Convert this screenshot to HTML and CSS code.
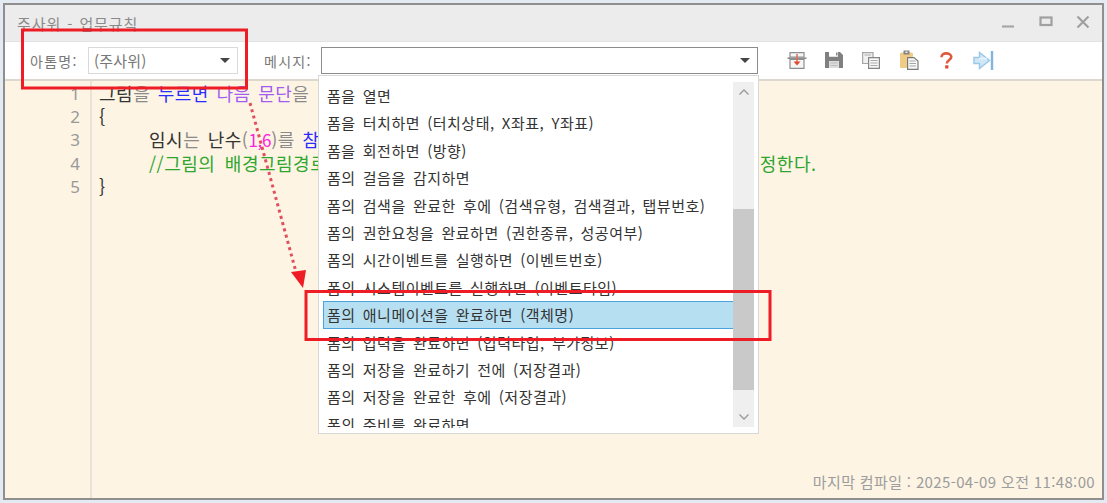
FILE: index.html
```html
<!DOCTYPE html>
<html lang="ko">
<head>
<meta charset="utf-8">
<title>주사위 - 업무규칙</title>
<link rel="stylesheet" href="styles.css">
</head>
<body>
<div class="window">
  <header class="titlebar">
    <span class="title">주사위 - 업무규칙</span>
    <div class="winbtns">
      <svg width="14" height="14" viewBox="0 0 14 14"><path d="M1 11.500H13" stroke="#a8a8a8" stroke-width="2.200" fill="none"/></svg>
      <svg width="14" height="14" viewBox="0 0 14 14"><rect x="1.500" y="2.500" width="11" height="7.500" stroke="#a0a0a0" stroke-width="2.200" fill="none"/></svg>
      <svg width="14" height="14" viewBox="0 0 14 14"><path d="M1.500 1.500L12.500 12.500M12.500 1.500L1.500 12.500" stroke="#a0a0a0" stroke-width="2.200" fill="none"/></svg>
    </div>
  </header>
  <div class="toolbar">
    <label class="lbl lbl-atom">아톰명:</label>
    <div class="combo combo-atom"><span>(주사위)</span><i class="caret"></i></div>
    <label class="lbl lbl-msg">메시지:</label>
    <div class="combo combo-msg"><span></span><i class="caret"></i></div>
    <div class="tools">
      <svg width="20" height="17" viewBox="0 0 20 17"><path d="M3 .7H17V5H3ZM3 7.500H17V16.300H3Z" fill="#f6f6f6" stroke="#8e8e8e" stroke-width="1.200"/><path d="M.5 6.200H19.500" stroke="#8e8e8e" stroke-width="1.700"/><path d="M10 2V10" stroke="#e06a52" stroke-width="1.500"/><path d="M6.500 9.500H13.500L10 13.500Z" fill="#e0492f"/></svg>
      <svg width="18" height="16" viewBox="0 0 18 16"><path d="M0 0H4V4.500H13V0H15L18 3V16H0Z" fill="#808080"/><path d="M4 9H14V16H4Z" fill="#dcdcdc"/><path d="M5.500 11H12.500M5.500 13.500H12.500" stroke="#bdbdbd"/><path d="M4 0H13V4.500H4Z" fill="#fff"/><path d="M11 .5H12.500V3.500H11Z" fill="#8a8a8a"/></svg>
      <svg width="18" height="17" viewBox="0 0 18 17"><path d="M.6.6H11V11.500H.6Z" fill="#f0f0f0" stroke="#a6a6a6" stroke-width="1.200"/><path d="M6.600 5.600H17.400V16.400H6.600Z" fill="#f6f6f6" stroke="#858585" stroke-width="1.200"/><path d="M8.500 8.500H15.500M8.500 11H15.500M8.500 13.500H15.500M2.500 3H9" stroke="#ababab"/></svg>
      <svg width="20" height="20" viewBox="0 0 20 20"><rect x="1" y="2.500" width="13" height="15.500" rx="1.500" fill="#f0cb85"/><rect x="4.500" y=".5" width="6" height="4" fill="#858585"/><rect x="6.500" y="1.500" width="2" height="1.500" fill="#eee"/><path d="M8.600 7.600H15L19 11V19.400H8.600Z" fill="#f8f8f8" stroke="#7a7a7a" stroke-width="1.200"/><path d="M10.500 11H16.500M10.500 13.500H17M10.500 16H17" stroke="#a3a3a3"/></svg>
      <svg width="13" height="17" viewBox="0 0 13 17"><path d="M1.500 5.200C1.500 2.500 3.700 1.400 6.200 1.400S11.300 2.700 11.300 5C11.300 8 6.800 8 6.800 11.500" fill="none" stroke="#dd5a3e" stroke-width="2.600"/><rect x="5.200" y="13.300" width="3.200" height="3.200" fill="#dd4a2e"/></svg>
      <svg width="22" height="21" viewBox="0 0 22 21"><path d="M1 7.500H6.500V2.500L16.500 10.500L6.500 18.500V13.500H1Z" fill="#cfe7f7" stroke="#9cc8e8" stroke-width="1.500"/><path d="M6 8.500H14" stroke="#e9f5fc" stroke-width="1.500"/><rect x="17.800" y="1" width="2.400" height="19" fill="#7fb6e0"/></svg>
    </div>
  </div>
  <main class="editor">
    <div class="gutter">
      <div>1</div><div>2</div><div>3</div><div>4</div><div>5</div>
    </div>
    <div class="code">
      <div class="ln"><span class="d">그림</span><span class="g">을</span> <span class="b">누르면</span> <span class="p">다음 문단</span><span class="g">을</span></div>
      <div class="ln d">{</div>
      <div class="ln in"><span class="d">임시</span><span class="g">는</span> <span class="d">난수</span><span class="g">(</span><span class="m">1,6</span><span class="g">)를</span> <span class="b">참</span></div>
      <div class="ln in c">//그림의 배경그림경로를 임시값과 파일이름으로 만들어 그림을 바꾸도록 지정한다.</div>
      <div class="ln d">}</div>
    </div>
    <div class="status">마지막 컴파일 : 2025-04-09 오전 11:48:00</div>
  </main>
  <div class="menu">
    <ul class="items">
      <li>폼을 열면</li>
      <li>폼을 터치하면 (터치상태, X좌표, Y좌표)</li>
      <li>폼을 회전하면 (방향)</li>
      <li>폼의 걸음을 감지하면</li>
      <li>폼의 검색을 완료한 후에 (검색유형, 검색결과, 탭뷰번호)</li>
      <li>폼의 권한요청을 완료하면 (권한종류, 성공여부)</li>
      <li>폼의 시간이벤트를 실행하면 (이벤트번호)</li>
      <li>폼의 시스템이벤트를 실행하면 (이벤트타입)</li>
      <li class="sel">폼의 애니메이션을 완료하면 (객체명)</li>
      <li>폼의 입력을 완료하면 (입력타입, 부가정보)</li>
      <li>폼의 저장을 완료하기 전에 (저장결과)</li>
      <li>폼의 저장을 완료한 후에 (저장결과)</li>
      <li>폼의 준비를 완료하면</li>
    </ul>
    <div class="scroll">
      <div class="sbtn"><svg width="12" height="8" viewBox="0 0 12 8"><path d="M1.500 6.500L6 2L10.500 6.500" fill="none" stroke="#999" stroke-width="1.300"/></svg></div>
      <div class="track"><div class="thumb"></div></div>
      <div class="sbtn"><svg width="12" height="8" viewBox="0 0 12 8"><path d="M1.500 1.500L6 6L10.500 1.500" fill="none" stroke="#999" stroke-width="1.300"/></svg></div>
    </div>
  </div>
</div>
<svg class="marks" width="1107" height="503" viewBox="0 0 1107 503">
  <rect x="22.500" y="30" width="224" height="58" fill="none" stroke="#ee1c25" stroke-width="3"/>
  <rect x="306" y="291.500" width="464" height="48" fill="none" stroke="#ee1c25" stroke-width="3"/>
  <path d="M250 103L296 272" fill="none" stroke="#e0505c" stroke-width="3" stroke-dasharray="3 3.500"/>
  <path d="M291 272L306 270L303 288Z" fill="#ee1c25"/>
</svg>
</body>
</html>
```
FILE: styles.css
```css
* { box-sizing: border-box; }
html, body { margin: 0; height: 100%; }
body {
  width: 1107px;
  height: 503px;
  padding: 3px;
  background: #e3eaf1;
  overflow: hidden;
  font-family: "Noto Sans CJK KR", "Noto Sans", sans-serif;
  position: relative;
}
.window {
  position: relative;
  width: 1101px;
  height: 497px;
  border: 2px solid #8f8f8f;
  display: flex;
  flex-direction: column;
  background: #fdf4e4;
}
.titlebar {
  height: 37px;
  flex: none;
  background: #ececec;
  border-bottom: 1px solid #e2e2e2;
  display: flex;
  align-items: center;
  justify-content: space-between;
  padding: 0 12px 0 12px;
}
.title { font-size: 15px; letter-spacing: .9px; word-spacing: 1px; color: #8a8a8a; }
.winbtns { display: flex; gap: 23.500px; margin-top: -2px; }
.toolbar {
  height: 39px;
  flex: none;
  background: #fff;
  border-bottom: 2px solid #dcd8d0;
  display: flex;
  align-items: center;
}
.lbl { font-size: 14px; letter-spacing: 1.300px; color: #777; white-space: nowrap; }
.lbl-atom { margin-left: 25px; width: 58px; }
.lbl-msg { margin-left: 26px; width: 57px; }
.combo {
  height: 27px;
  border: 1px solid #dadada;
  display: flex;
  align-items: center;
  justify-content: space-between;
  padding: 0 7px 0 5px;
  font-size: 15px;
  letter-spacing: .2px;
  color: #777;
  background: #fff;
}
.combo-atom { width: 150px; }
.combo-msg { width: 437px; border-color: #8c8c8c; }
.caret {
  width: 0; height: 0;
  border-left: 5px solid transparent;
  border-right: 5px solid transparent;
  border-top: 5px solid #444;
}
.tools {
  display: grid;
  grid-template-columns: repeat(6, 37.400px);
  justify-items: center;
  align-items: center;
  margin-left: 20px;
  margin-top: -1px;
}
.editor {
  flex: 1;
  display: flex;
  position: relative;
  background: #fdf4e4;
}
.gutter {
  width: 87px;
  flex: none;
  border-right: 2px solid #e8e2d8;
  padding: 1px 10px 0 0;
  text-align: right;
  color: #999;
  font-family: "Noto Sans", sans-serif;
  font-size: 17px;
  line-height: 23.200px;
}
.code {
  padding: 1px 0 0 7px;
  font-size: 18px;
  line-height: 23.200px;
  letter-spacing: .5px;
  word-spacing: 2px;
  white-space: nowrap;
}
.ln { height: 23.200px; }
.in { padding-left: 50px; }
.d { color: #333; }
.g { color: #8a8a8a; }
.b { color: #2b2bff; }
.p { color: #a45cf0; }
.m { color: #ff22dd; font-size: 17px; letter-spacing: -.3px; }
.c { color: #2ea62e; word-spacing: 4px; }
.status {
  position: absolute;
  right: 7px;
  bottom: 6px;
  font-size: 15px;
  letter-spacing: .35px;
  color: #9c9c9c;
}
.menu {
  position: absolute;
  left: 313px;
  top: 70px;
  width: 441px;
  height: 359px;
  background: #fff;
  border: 1px solid #d8d8d8;
  overflow: hidden;
}
.items {
  list-style: none;
  margin: 6px 0 0 4px;
  padding: 0;
  width: 411px;
  height: 346px;
  overflow: hidden;
  font-size: 15px;
  letter-spacing: .5px;
  word-spacing: 2.500px;
  color: #333;
}
.items li {
  height: 27.400px;
  line-height: 27.400px;
  padding-left: 4px;
  white-space: nowrap;
}
.sel { background: #b6dff2; outline: 1px solid #4aa3df; outline-offset: -1px; }
.scroll {
  position: absolute;
  left: 414px;
  top: 6px;
  width: 21px;
  height: 345px;
  background: #efefef;
  display: flex;
  flex-direction: column;
}
.sbtn { height: 20px; flex: none; display: flex; align-items: center; justify-content: center; }
.track { flex: 1; padding-top: 107px; }
.thumb { height: 181px; background: #c9c9c9; }
.marks { position: absolute; left: 0; top: 0; pointer-events: none; }
```
